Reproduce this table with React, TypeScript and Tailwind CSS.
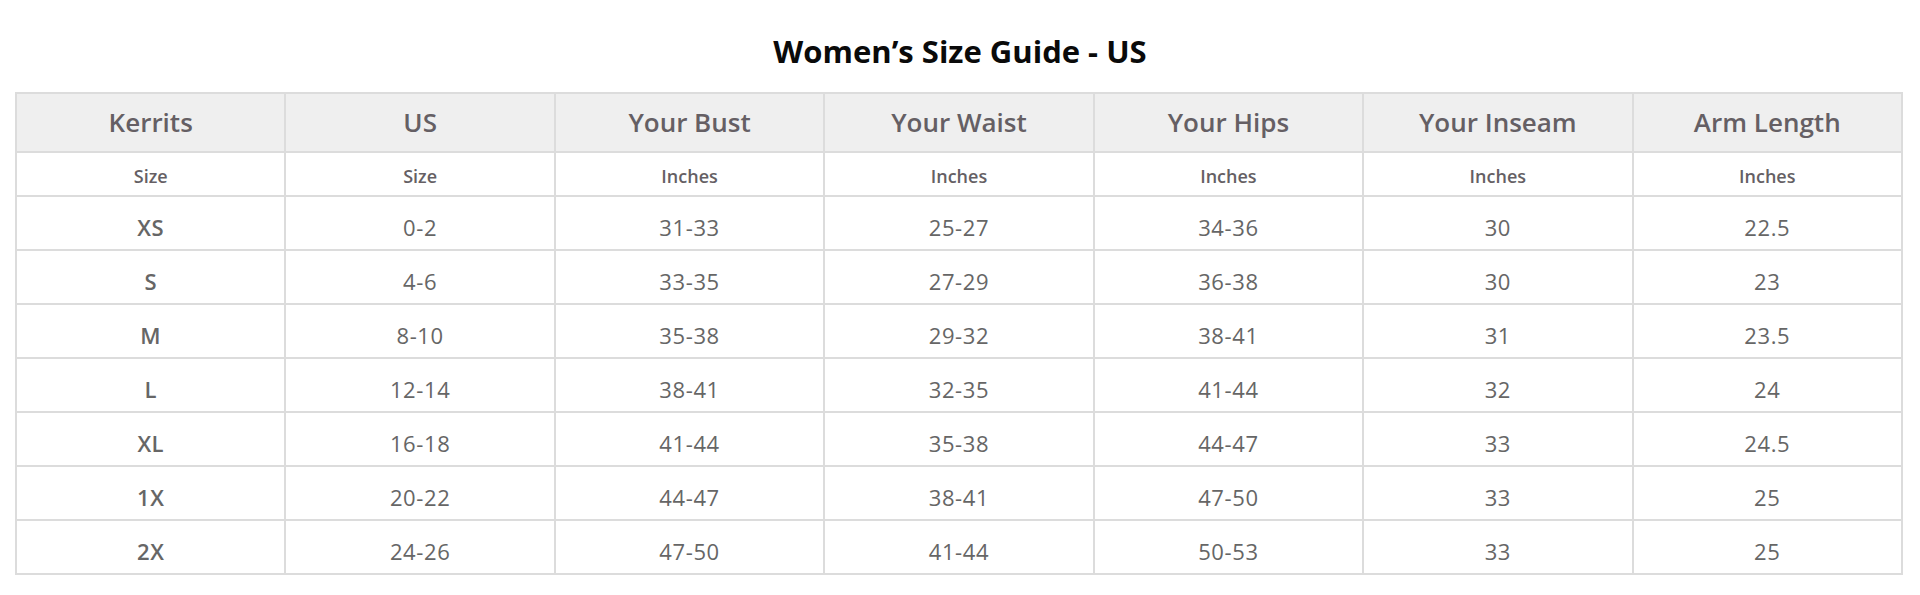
const columns = [
  { title: "Kerrits", unit: "Size" },
  { title: "US", unit: "Size" },
  { title: "Your Bust", unit: "Inches" },
  { title: "Your Waist", unit: "Inches" },
  { title: "Your Hips", unit: "Inches" },
  { title: "Your Inseam", unit: "Inches" },
  { title: "Arm Length", unit: "Inches" },
]

const rows = [
  ["XS", "0-2", "31-33", "25-27", "34-36", "30", "22.5"],
  ["S", "4-6", "33-35", "27-29", "36-38", "30", "23"],
  ["M", "8-10", "35-38", "29-32", "38-41", "31", "23.5"],
  ["L", "12-14", "38-41", "32-35", "41-44", "32", "24"],
  ["XL", "16-18", "41-44", "35-38", "44-47", "33", "24.5"],
  ["1X", "20-22", "44-47", "38-41", "47-50", "33", "25"],
  ["2X", "24-26", "47-50", "41-44", "50-53", "33", "25"],
]

export default function App() {
  return (
    <div className="min-h-[595px] w-full bg-white font-['Open_Sans','Lato',sans-serif]">
      <h2 className="pt-[35px] pb-[25px] text-center text-[31px] leading-[32px] font-bold text-[#0a0a0a]">
        Women’s Size Guide - US
      </h2>

      <div className="ml-[15px] mr-[17px]">
        <table className="w-full table-fixed border-collapse border-2 border-[#dcdcdc]">
          <thead>
            <tr className="h-[59px] bg-[#efefef]">
              {columns.map((c) => (
                <th
                  key={c.title}
                  className="border-2 border-[#dcdcdc] text-center text-[26px] font-semibold text-[#655f64]"
                >
                  {c.title}
                </th>
              ))}
            </tr>
            <tr className="h-[44px]">
              {columns.map((c, i) => (
                <th
                  key={i}
                  className="border-2 border-[#dcdcdc] pt-[4px] text-center text-[18px] font-semibold text-[#655f64]"
                >
                  {c.unit}
                </th>
              ))}
            </tr>
          </thead>
          <tbody>
            {rows.map((r) => (
              <tr key={r[0]} className="h-[54px]">
                {r.map((v, i) => (
                  <td
                    key={i}
                    className={
                      i === 0
                        ? "border-2 border-[#dcdcdc] pt-[9px] text-center text-[22px] font-semibold tracking-[0.5px] text-[#666666]"
                        : "border-2 border-[#dcdcdc] pt-[9px] text-center text-[22px] tracking-[0.6px] text-[#666666]"
                    }
                  >
                    {v}
                  </td>
                ))}
              </tr>
            ))}
          </tbody>
        </table>
      </div>
    </div>
  )
}
